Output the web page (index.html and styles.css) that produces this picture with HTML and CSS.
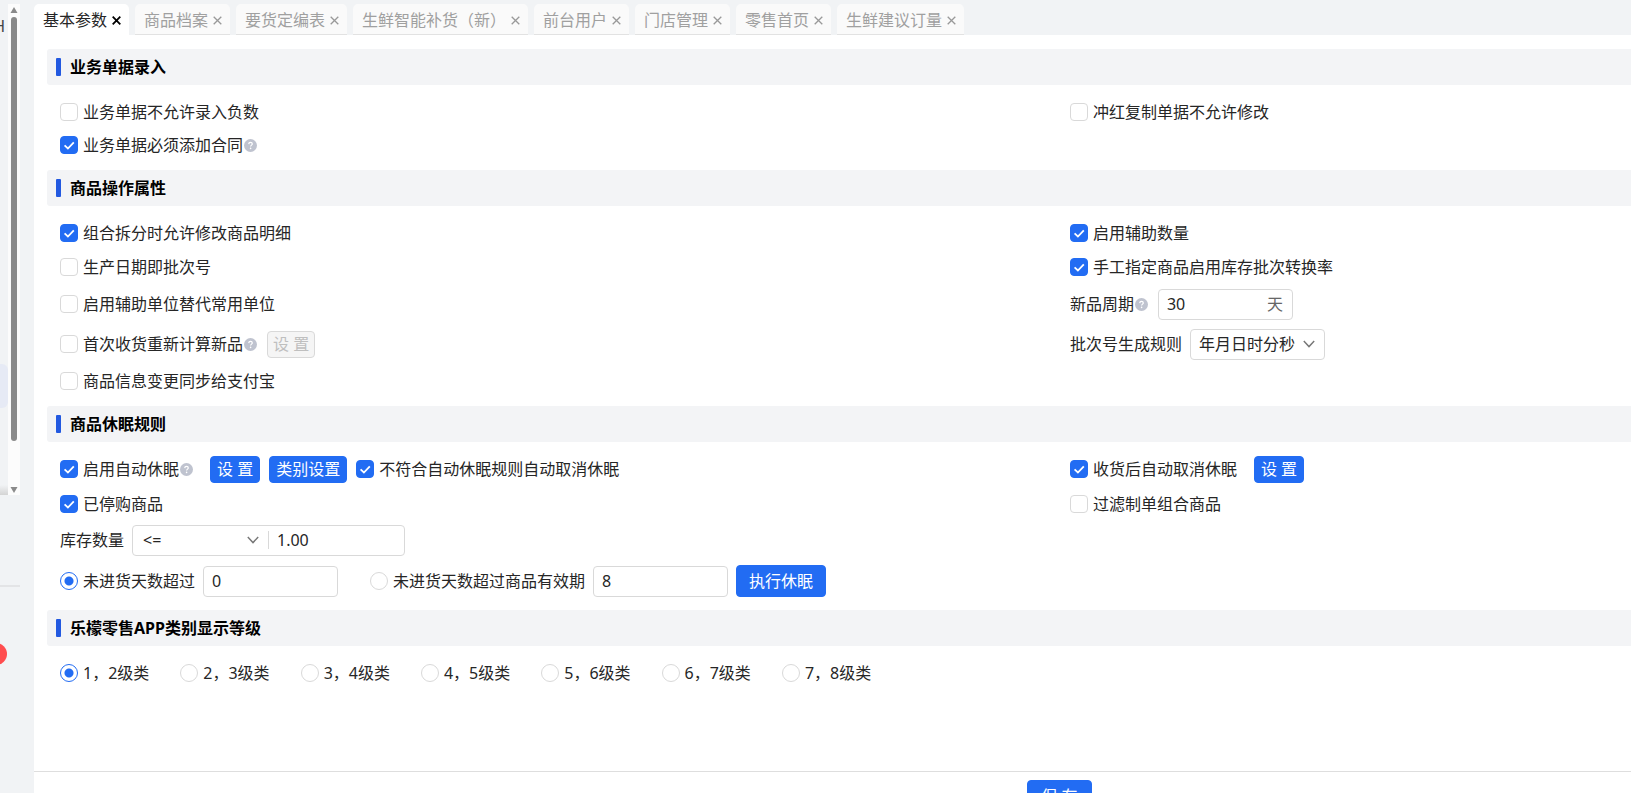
FILE: styles.css
```css
* { box-sizing: border-box; }
body {
  margin: 0;
  height: 100vh;
  overflow: hidden;
  background: #f1f3f5;
  color: #262626;
  font: 16px/24px "Noto Sans", "Noto Sans CJK SC", sans-serif;
}
input, select, button { font: inherit; color: inherit; margin: 0; }
.defs { display: none; }
.app { display: flex; height: calc(100vh + 28px); }

.sidebar { flex: 0 0 34px; padding-right: 14px; display: flex; flex-direction: column; }
.side-top { height: 495px; padding-top: 4px; display: flex; }
.side-menu { width: 8px; display: flex; flex-direction: column; overflow: hidden; }
.side-text { align-self: flex-end; margin-right: 3px; padding-top: 10px; color: #444; }
.side-active { margin-top: 326px; height: 44px; background: #e6eaf5; border-radius: 0 6px 6px 0; }
.side-shade { margin-top: auto; height: 10px; background: linear-gradient(#f1f3f5, #d4d4d4); }
.scrollbar {
  width: 12px;
  background: #fcfcfc;
  display: flex;
  flex-direction: column;
  align-items: center;
  padding: 3px 0 2px;
}
.thumb { width: 6px; height: 424px; margin: 4px 0 auto; border-radius: 3px; background: #8a8a8a; }
.side-bottom { margin-top: 90px; padding-top: 56px; border-top: 2px solid #e3e4e6; overflow: hidden; }
.badge { display: block; width: 22px; height: 22px; margin-left: -15px; border-radius: 50%; background: #ff4d4f; }

.main { flex: 1; min-width: 0; display: flex; flex-direction: column; background: #fff; }
.tabs { display: flex; gap: 6px; height: 35px; padding-top: 4px; background: #f1f3f5; }
.tab {
  display: flex;
  align-items: center;
  gap: 5px;
  padding: 2px 8px 0 9px;
  background: #fafafa;
  border-bottom: 1px solid #e2e2e2;
  border-radius: 5px 5px 0 0;
  color: #a0a0a0;
  white-space: nowrap;
}
.tab.active { background: #fff; border-color: #fff; color: #262626; }
.close { display: flex; padding: 0; border: 0; background: none; color: #999; }
.close svg { width: 9px; height: 9px; stroke-width: 1.3px; }
.active .close { color: #000; }
.active .close svg { stroke-width: 1.8px; }

.content { flex: 1; padding: 14px 0 0 13px; }
.title {
  display: flex;
  align-items: center;
  gap: 9px;
  height: 36px;
  margin: 0;
  padding-left: 9px;
  border-radius: 3px 0 0 3px;
  background: #f3f4f6;
  color: #000;
  font-size: 16px;
  font-weight: 700;
}
.title::before { content: ""; width: 5px; height: 18px; border-radius: 1px; background: #2259e0; }
.grid { display: grid; grid-template-columns: 9fr 5fr; padding: 10px 0 8px 13px; }
.entry { grid-template-rows: 33px 34px; }
.goods { grid-template-rows: 34px 34px 40px 40px 34px; }
.sleep { grid-template-rows: 34px 36px 36px 46px; padding-bottom: 6px; }
.levels { grid-template-rows: 34px; }
.row { display: flex; align-items: center; white-space: nowrap; }
.wide { grid-column: 1 / -1; }
.check { display: flex; align-items: center; gap: 5px; }
.check input {
  appearance: none;
  flex: none;
  width: 18px;
  height: 18px;
  border: 1px solid #d9d9d9;
  border-radius: 4px;
  background: #fff;
}
.check input[type="checkbox"]:checked {
  border-color: #226cf3;
  background: #226cf3 url("data:image/svg+xml,%3Csvg xmlns='http://www.w3.org/2000/svg' viewBox='0 0 16 16'%3E%3Cpath d='M3.6 8.4 6.9 11.5 12.8 5.3' fill='none' stroke='%23fff' stroke-width='1.8'/%3E%3C/svg%3E") center / 16px 16px no-repeat;
}
.check input[type="radio"] { border-radius: 50%; }
.check input[type="radio"]:checked {
  border-color: #226cf3;
  background: radial-gradient(circle, #226cf3 4px, #fff 5px);
}
.help { flex: none; width: 13px; height: 13px; margin-left: 1px; }
.after-help { margin-left: 10px; }
.after-label { margin-left: 8px; }
.actions { display: flex; align-items: center; gap: 9px; margin-left: 17px; }

.field {
  display: flex;
  align-items: center;
  width: 135px;
  height: 31px;
  border: 1px solid #d9d9d9;
  border-radius: 4px;
  background-color: #fff;
}
.field input { flex: 1; min-width: 0; padding: 0 8px; border: 0; background: none; outline: 0; }
.unit { padding-right: 9px; color: #666; }
.select {
  appearance: none;
  padding: 0 8px;
  background: #fff url("data:image/svg+xml,%3Csvg xmlns='http://www.w3.org/2000/svg' viewBox='0 0 12 8'%3E%3Cpath d='M0.8 1 6 6.6 11.2 1' fill='none' stroke='%23777' stroke-width='1.4'/%3E%3C/svg%3E") right 9px center / 12px 8px no-repeat;
}
.combo { width: 273px; }
.combo .select { width: 136px; height: 18px; padding-left: 10px; border: 0; border-right: 1px solid #d9d9d9; line-height: 18px; }
.next { margin-left: 32px; }

.btn {
  height: 32px;
  padding: 0 12px;
  border: 1px solid #226cf3;
  border-radius: 4px;
  background: #226cf3;
  color: #fff;
  line-height: 24px;
}
.btn.small { height: 27px; padding: 0 5px; }
.actions .btn.small { padding: 0 6px; }
.btn:disabled { border-color: #d9d9d9; background: #f5f5f5; color: #bfbfbf; }
.run { margin-left: 8px; }
.options { gap: 31px; }
.footer { height: 50px; padding-top: 8px; border-top: 1px solid #dedede; }
.save { padding: 0 13px; margin-left: 62.2%; }
```
FILE: index.html
```html
<!DOCTYPE html>
<html lang="zh-CN">
<head>
<meta charset="utf-8">
<title>基本参数</title>
<link rel="stylesheet" href="styles.css">
</head>
<body>
<svg class="defs" aria-hidden="true">
  <symbol id="close" viewBox="0 0 9 9"><path d="M0.7 0.7 8.3 8.3M8.3 0.7 0.7 8.3" fill="none" stroke="currentColor"/></symbol>
  <symbol id="help" viewBox="0 0 13 13"><circle cx="6.5" cy="6.5" r="6.5" fill="#bfc3cf"/><path d="M4.7 5.1C4.8 3.9 5.5 3.3 6.5 3.3 7.6 3.3 8.3 4 8.3 4.9 8.3 6.1 6.6 6.2 6.6 7.6" fill="none" stroke="#fff" stroke-width="1.2"/><circle cx="6.6" cy="9.4" r="0.8" fill="#fff"/></symbol>
</svg>
<div class="app">
  <aside class="sidebar">
    <div class="side-top">
      <nav class="side-menu">
        <span class="side-text">H</span>
        <span class="side-active"></span>
        <span class="side-shade"></span>
      </nav>
      <div class="scrollbar">
        <svg width="8" height="6" viewBox="0 0 8 6"><path d="M4 0 7.5 6H0.5Z" fill="#8a8a8a"/></svg>
        <span class="thumb"></span>
        <svg width="8" height="6" viewBox="0 0 8 6"><path d="M0.5 0H7.5L4 6Z" fill="#8a8a8a"/></svg>
      </div>
    </div>
    <div class="side-bottom"><span class="badge"></span></div>
  </aside>
  <main class="main">
    <nav class="tabs">
      <div class="tab active"><span>基本参数</span><button class="close" aria-label="关闭"><svg><use href="#close"/></svg></button></div>
      <div class="tab"><span>商品档案</span><button class="close" aria-label="关闭"><svg><use href="#close"/></svg></button></div>
      <div class="tab"><span>要货定编表</span><button class="close" aria-label="关闭"><svg><use href="#close"/></svg></button></div>
      <div class="tab"><span>生鲜智能补货（新）</span><button class="close" aria-label="关闭"><svg><use href="#close"/></svg></button></div>
      <div class="tab"><span>前台用户</span><button class="close" aria-label="关闭"><svg><use href="#close"/></svg></button></div>
      <div class="tab"><span>门店管理</span><button class="close" aria-label="关闭"><svg><use href="#close"/></svg></button></div>
      <div class="tab"><span>零售首页</span><button class="close" aria-label="关闭"><svg><use href="#close"/></svg></button></div>
      <div class="tab"><span>生鲜建议订量</span><button class="close" aria-label="关闭"><svg><use href="#close"/></svg></button></div>
    </nav>
    <form class="content">
      <section>
        <h2 class="title">业务单据录入</h2>
        <div class="grid entry">
          <div class="row"><label class="check"><input type="checkbox">业务单据不允许录入负数</label></div>
          <div class="row"><label class="check"><input type="checkbox">冲红复制单据不允许修改</label></div>
          <div class="row"><label class="check"><input type="checkbox" checked>业务单据必须添加合同</label><svg class="help"><use href="#help"/></svg></div>
        </div>
      </section>
      <section>
        <h2 class="title">商品操作属性</h2>
        <div class="grid goods">
          <div class="row"><label class="check"><input type="checkbox" checked>组合拆分时允许修改商品明细</label></div>
          <div class="row"><label class="check"><input type="checkbox" checked>启用辅助数量</label></div>
          <div class="row"><label class="check"><input type="checkbox">生产日期即批次号</label></div>
          <div class="row"><label class="check"><input type="checkbox" checked>手工指定商品启用库存批次转换率</label></div>
          <div class="row"><label class="check"><input type="checkbox">启用辅助单位替代常用单位</label></div>
          <div class="row"><label for="cycle">新品周期</label><svg class="help"><use href="#help"/></svg><span class="field after-help"><input id="cycle" type="text" value="30"><span class="unit">天</span></span></div>
          <div class="row"><label class="check"><input type="checkbox">首次收货重新计算新品</label><svg class="help"><use href="#help"/></svg><button type="button" class="btn small after-help" disabled>设 置</button></div>
          <div class="row"><label for="rule">批次号生成规则</label><select id="rule" class="field select after-label"><option>年月日时分秒</option></select></div>
          <div class="row"><label class="check"><input type="checkbox">商品信息变更同步给支付宝</label></div>
        </div>
      </section>
      <section>
        <h2 class="title">商品休眠规则</h2>
        <div class="grid sleep">
          <div class="row"><label class="check"><input type="checkbox" checked>启用自动休眠</label><svg class="help"><use href="#help"/></svg><div class="actions"><button type="button" class="btn small">设 置</button><button type="button" class="btn small">类别设置</button><label class="check"><input type="checkbox" checked>不符合自动休眠规则自动取消休眠</label></div></div>
          <div class="row"><label class="check"><input type="checkbox" checked>收货后自动取消休眠</label><div class="actions"><button type="button" class="btn small">设 置</button></div></div>
          <div class="row"><label class="check"><input type="checkbox" checked>已停购商品</label></div>
          <div class="row"><label class="check"><input type="checkbox">过滤制单组合商品</label></div>
          <div class="row wide"><label for="stock">库存数量</label><span class="field combo after-label"><select class="select" aria-label="比较"><option>&lt;=</option></select><input id="stock" type="text" value="1.00"></span></div>
          <div class="row wide"><label class="check"><input type="radio" name="days" checked>未进货天数超过</label><span class="field after-label"><input type="text" value="0" aria-label="天数"></span><label class="check next"><input type="radio" name="days">未进货天数超过商品有效期</label><span class="field after-label"><input type="text" value="8" aria-label="有效期"></span><button type="button" class="btn run">执行休眠</button></div>
        </div>
      </section>
      <section>
        <h2 class="title">乐檬零售APP类别显示等级</h2>
        <div class="grid levels">
          <div class="row wide options">
            <label class="check"><input type="radio" name="level" checked>1，2级类</label>
            <label class="check"><input type="radio" name="level">2，3级类</label>
            <label class="check"><input type="radio" name="level">3，4级类</label>
            <label class="check"><input type="radio" name="level">4，5级类</label>
            <label class="check"><input type="radio" name="level">5，6级类</label>
            <label class="check"><input type="radio" name="level">6，7级类</label>
            <label class="check"><input type="radio" name="level">7，8级类</label>
          </div>
        </div>
      </section>
    </form>
    <footer class="footer"><button type="button" class="btn save">保 存</button></footer>
  </main>
</div>
</body>
</html>
```
